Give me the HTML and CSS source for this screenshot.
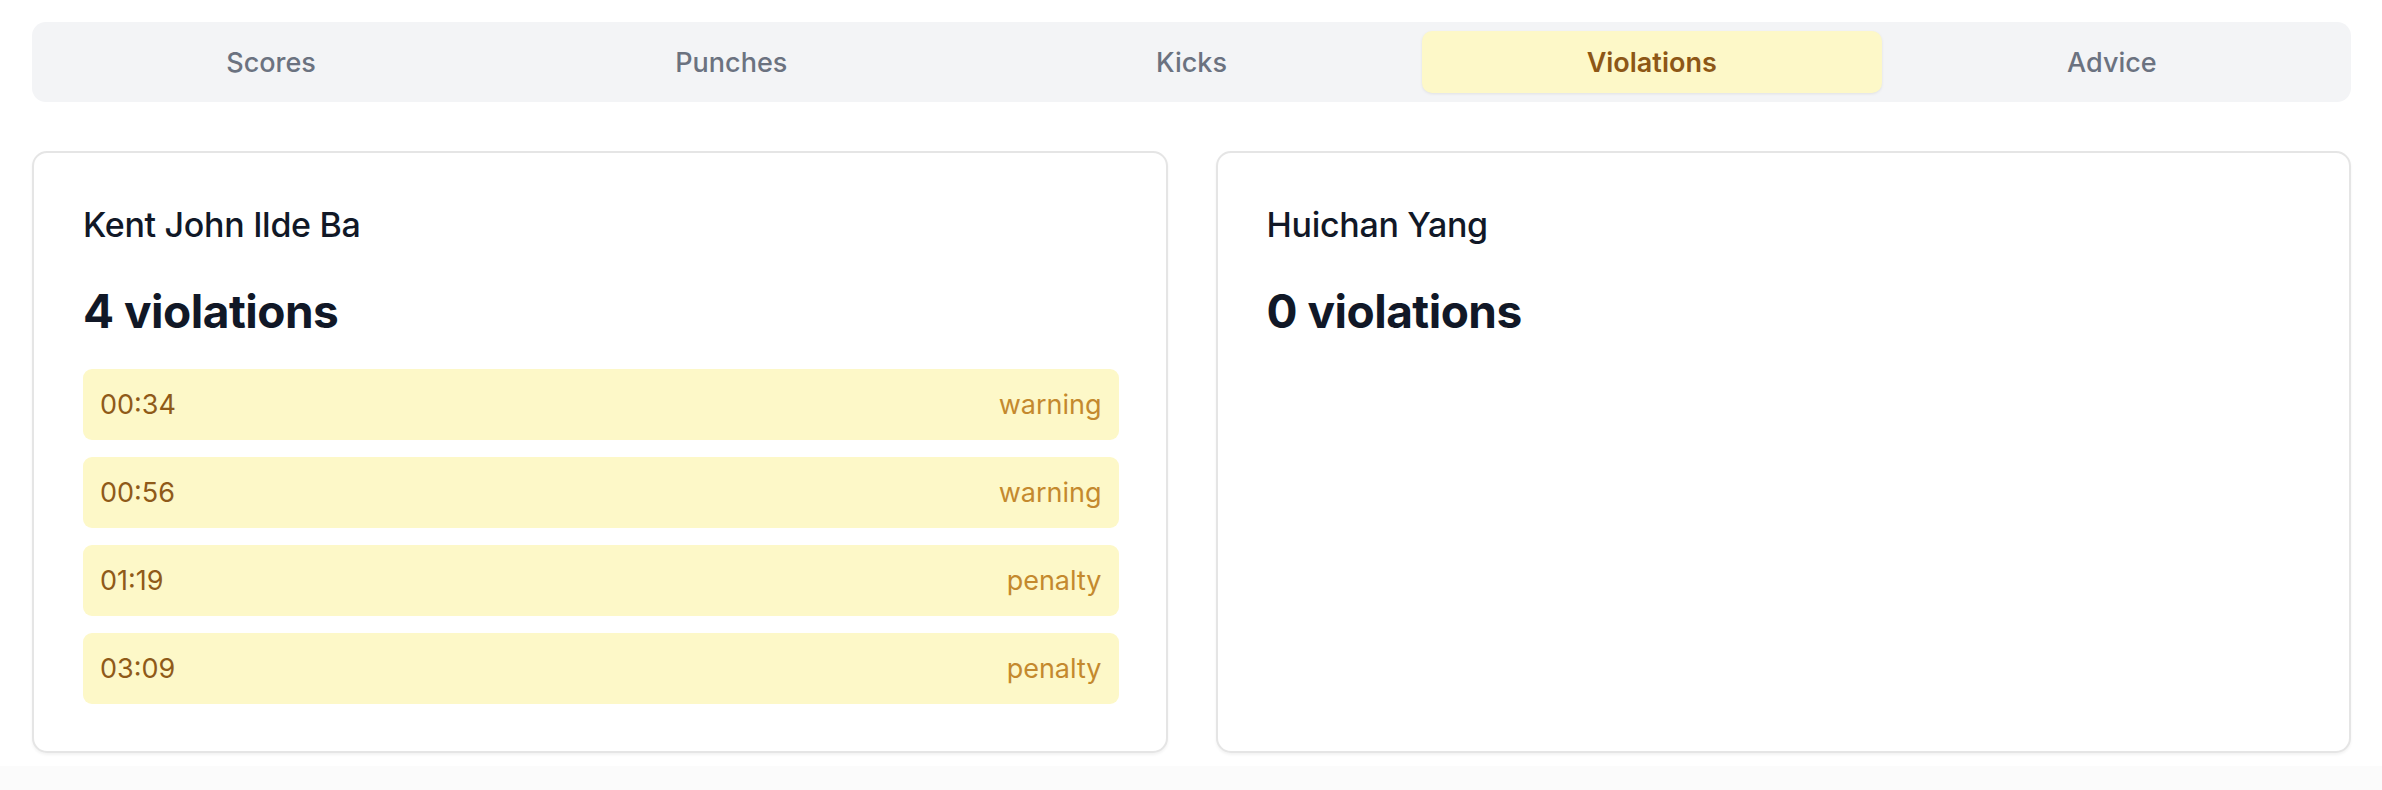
FILE: index.html
```html
<!DOCTYPE html>
<html lang="en">
<head>
<meta charset="utf-8">
<title>Violations</title>
<link rel="stylesheet" href="styles.css">
</head>
<body>
<main class="page">
  <nav class="tabs">
    <div class="tab">Scores</div>
    <div class="tab">Punches</div>
    <div class="tab">Kicks</div>
    <div class="tab tab-active">Violations</div>
    <div class="tab">Advice</div>
  </nav>
  <section class="cards">
    <article class="card">
      <h2 class="name">Kent John Ilde Ba</h2>
      <h3 class="count">4 violations</h3>
      <ul class="list">
        <li class="row"><span class="time">00:34</span><span class="kind">warning</span></li>
        <li class="row"><span class="time">00:56</span><span class="kind">warning</span></li>
        <li class="row"><span class="time">01:19</span><span class="kind">penalty</span></li>
        <li class="row"><span class="time">03:09</span><span class="kind">penalty</span></li>
      </ul>
    </article>
    <article class="card">
      <h2 class="name">Huichan Yang</h2>
      <h3 class="count">0 violations</h3>
    </article>
  </section>
</main>
<div class="footer-strip"></div>
</body>
</html>
```
FILE: styles.css
```css
* { box-sizing: border-box; }
html, body { margin: 0; padding: 0; }
body {
  background: #ffffff;
  font-family: Inter, "Noto Sans", "Liberation Sans", sans-serif;
  color: #111827;
  height: 790px;
  overflow: hidden;
}
.page {
  padding: 22px 31px 0 32px;
  height: 766px;
}
.tabs {
  display: grid;
  grid-template-columns: repeat(5, 1fr);
  background: #f3f4f6;
  border-radius: 14px;
  padding: 9px;
  height: 80px;
}
.tab {
  display: flex;
  align-items: center;
  justify-content: center;
  font-size: 27px;
  font-weight: 500;
  color: #6b7280;
  border-radius: 10px;
}
.tab-active {
  background: #fdf8c8;
  color: #8d5716;
  font-weight: 600;
  box-shadow: 0 1px 3px rgba(0,0,0,0.08);
}
.cards {
  display: grid;
  grid-template-columns: 1fr 1fr;
  gap: 48px;
  margin-top: 49px;
}
.card {
  border: 2px solid #e5e5e5;
  border-radius: 15px;
  padding: 48px 47px 47px 49px;
  height: 602px;
  background: #fff;
  box-shadow: 0 2px 3px rgba(0,0,0,0.05);
}
.name {
  margin: 0;
  font-size: 34px;
  font-weight: 500;
  line-height: 48px;
  letter-spacing: -0.3px;
  color: #111827;
}
.count {
  margin: 32px 0 0;
  font-size: 46px;
  font-weight: 700;
  line-height: 60px;
  letter-spacing: -0.5px;
  color: #111827;
}
.list {
  list-style: none;
  margin: 28px 0 0;
  padding: 0;
  display: flex;
  flex-direction: column;
  gap: 17px;
}
.row {
  display: flex;
  justify-content: space-between;
  align-items: center;
  height: 71px;
  padding: 0 17px;
  background: #fdf8c8;
  border-radius: 9px;
  font-size: 27px;
}
.time { color: #8f5a19; }
.kind { color: #c4892e; }
.footer-strip {
  height: 24px;
  background: #fbfbfb;
}
```
